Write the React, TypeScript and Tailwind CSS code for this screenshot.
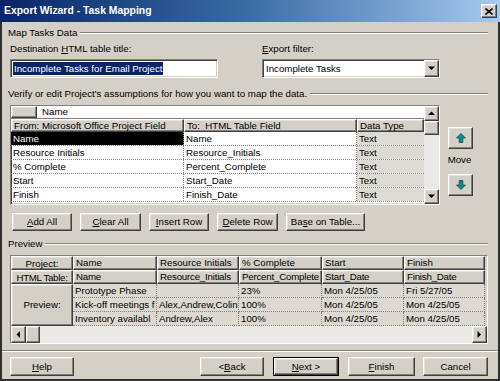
import React from 'react';

const raised =
  'bg-[#d4d0c8] border border-t-white border-l-white border-r-[#404040] border-b-[#404040] shadow-[inset_-1px_-1px_0_#808080,inset_1px_1px_0_#e4e1db]';
const sunken =
  'border border-t-[#808080] border-l-[#808080] border-r-white border-b-white shadow-[inset_1px_1px_0_#404040,inset_-1px_-1px_0_#d4d0c8]';

const U: React.FC<{ text: string; at: number }> = ({ text, at }) => {
  if (at < 0) return <>{text}</>;
  return (
    <>
      {text.slice(0, at)}
      <span className="underline underline-offset-[1px]">{text[at]}</span>
      {text.slice(at + 1)}
    </>
  );
};

const Btn: React.FC<{ label: string; u: number; w: string; def?: boolean }> = ({ label, u, w, def }) => (
  <div className={`${w} h-full ${def ? 'border border-black' : ''}`}>
    <div className={`${raised} w-full h-full flex items-center justify-center`}>
      <U text={label} at={u} />
    </div>
  </div>
);

const Tri: React.FC<{ dir: 'up' | 'down' | 'left' | 'right' }> = ({ dir }) => {
  const pts = {
    up: '0,4 7,4 3.5,0.5',
    down: '0,0.5 7,0.5 3.5,4',
    left: '4,0 4,7 0.5,3.5',
    right: '0.5,0 0.5,7 4,3.5',
  }[dir];
  const vb = dir === 'up' || dir === 'down' ? '0 0 7 4.5' : '0 0 4.5 7';
  const cls = dir === 'up' || dir === 'down' ? 'w-[7px] h-[4.5px]' : 'w-[4.5px] h-[7px]';
  return (
    <svg viewBox={vb} className={cls}>
      <polygon points={pts} fill="#000" />
    </svg>
  );
};

const ScrollBtn: React.FC<{ dir: 'up' | 'down' | 'left' | 'right'; cls: string }> = ({ dir, cls }) => (
  <div className={`${raised} ${cls} flex items-center justify-center shrink-0`}>
    <Tri dir={dir} />
  </div>
);

const MoveArrow: React.FC<{ down?: boolean }> = ({ down }) => (
  <svg viewBox="0 0 10 10" className={`w-[10px] h-[10px] ${down ? 'rotate-180' : ''}`}>
    <path d="M5 0.5 L9.5 5 H6.8 V9.5 H3.2 V5 H0.5 Z" fill="#0e8a8a" stroke="#0b4f4f" strokeWidth="0.8" />
  </svg>
);

const Etched: React.FC<{ className?: string }> = ({ className = '' }) => (
  <div className={`h-[2px] border-t border-t-[#808080] border-b border-b-white ${className}`} />
);

const mapRows = [
  ['Name', 'Name'],
  ['Resource Initials', 'Resource_Initials'],
  ['% Complete', 'Percent_Complete'],
  ['Start', 'Start_Date'],
  ['Finish', 'Finish_Date'],
];

const previewRows = [
  ['Prototype Phase', '', '23%', 'Mon 4/25/05', 'Fri 5/27/05'],
  ['Kick-off meetings f', 'Alex,Andrew,Colin', '100%', 'Mon 4/25/05', 'Mon 4/25/05'],
  ['Inventory availabl', 'Andrew,Alex', '100%', 'Mon 4/25/05', 'Mon 4/25/05'],
];

const App: React.FC = () => {
  return (
    <div className="w-[500px] h-[381px] flex flex-col bg-[#d4d0c8] text-black text-[9.7px] leading-[12px] font-['Liberation_Sans',Arial,sans-serif] overflow-hidden select-none">
      {/* Title bar */}
      <div className="h-[22px] shrink-0 flex items-center justify-between pl-[4px] pr-[3px] bg-linear-to-r from-[#0a246a] via-[#3a6ea5] to-[#a6caf0]">
        <span className="text-white font-bold text-[10.4px]">Export Wizard - Task Mapping</span>
        <div className={`${raised} w-[16px] h-[14px] flex items-center justify-center`}>
          <svg viewBox="0 0 8 7" className="w-[8px] h-[7px]">
            <path d="M0.5 0.5 L7.5 6.5 M7.5 0.5 L0.5 6.5" stroke="#000" strokeWidth="1.6" />
          </svg>
        </div>
      </div>

      {/* Body */}
      <div className="flex-1 flex flex-col pl-[6px] pr-[10px] border-x-2 border-b-2 border-x-[#303030] border-b-[#303030]">
        <div className="mt-[5px] h-[12px] flex items-center">
          <span className="pr-[3px]">Map Tasks Data</span>
          <Etched className="flex-1" />
        </div>

        <div className="flex ml-[2px] mt-[4px]">
          <div className="w-[208px]">
            <div className="h-[12px]">
              Destination <U text="HTML" at={0} /> table title:
            </div>
            <div className={`${sunken} mt-[4px] h-[19px] bg-white flex items-center px-[2px]`}>
              <span className="bg-[#0a246a] text-white px-[1px] leading-[13px]">Incomplete Tasks for Email Project</span>
            </div>
          </div>
          <div className="w-[178px] ml-[44px]">
            <div className="h-[12px]">
              <U text="Export filter:" at={0} />
            </div>
            <div className={`${sunken} mt-[4px] h-[19px] bg-white flex items-center`}>
              <span className="flex-1 pl-[3px]">Incomplete Tasks</span>
              <ScrollBtn dir="down" cls="w-[15px] h-full" />
            </div>
          </div>
        </div>

        <div className="mt-[10px] h-[12px] flex items-center">
          <span className="pr-[3px]">Verify or edit Project's assumptions for how you want to map the data.</span>
          <Etched className="flex-1" />
        </div>

        {/* Mapping grid + move buttons */}
        <div className="flex ml-[2px] mt-[5px]">
          <div className={`${sunken} w-[430px] h-[100px] bg-white flex`}>
            <div className="flex-1 flex flex-col">
              <div className="h-[13px] flex border-b border-[#808080]">
                <div className={`${raised} w-[26px] h-full`} />
                <div className="flex-1 bg-white pl-[5px] leading-[12px]">Name</div>
              </div>
              <div className="h-[13px] flex">
                <div className={`${raised} w-[173px] pl-[2px] leading-[11px]`}>From: Microsoft Office Project Field</div>
                <div className={`${raised} w-[173px] pl-[2px] leading-[11px]`}>To:&nbsp; HTML Table Field</div>
                <div className={`${raised} flex-1 pl-[2px] leading-[11px]`}>Data Type</div>
              </div>
              {mapRows.map((r, i) => (
                <div key={i} className="h-[14px] flex border-b border-dotted border-[#808080]">
                  <div
                    className={`w-[173px] pl-[2px] leading-[13px] border-r border-dotted border-[#808080] ${
                      i === 0 ? 'bg-black text-white' : ''
                    }`}
                  >
                    {r[0]}
                  </div>
                  <div className="w-[173px] pl-[2px] leading-[13px] border-r border-dotted border-[#808080]">{r[1]}</div>
                  <div className="flex-1 pl-[2px] leading-[13px] bg-[#dddad4]">Text</div>
                </div>
              ))}
            </div>
            <div className="w-[15px] flex flex-col bg-[#ebe9e5]">
              <ScrollBtn dir="up" cls="h-[15px] w-full" />
              <div className={`${raised} h-[14px] w-full`} />
              <div className="flex-1" />
              <ScrollBtn dir="down" cls="h-[15px] w-full" />
            </div>
          </div>

          <div className="ml-[8px] w-[25px] flex flex-col items-center">
            <div className={`${raised} mt-[22px] w-[25px] h-[22px] flex items-center justify-center`}>
              <MoveArrow />
            </div>
            <div className="mt-[5px] h-[12px] -ml-[2px]">Move</div>
            <div className={`${raised} mt-[8px] w-[25px] h-[22px] flex items-center justify-center`}>
              <MoveArrow down />
            </div>
          </div>
        </div>

        {/* Action buttons */}
        <div className="flex gap-[8px] ml-[4px] mt-[8px] h-[18px]">
          <Btn label="Add All" u={0} w="w-[60px]" />
          <Btn label="Clear All" u={0} w="w-[61px]" />
          <Btn label="Insert Row" u={0} w="w-[60px]" />
          <Btn label="Delete Row" u={0} w="w-[61px]" />
          <Btn label="Base on Table..." u={2} w="w-[79px]" />
        </div>

        <div className="mt-[7px] h-[12px] flex items-center">
          <span className="pr-[3px]">Preview</span>
          <Etched className="flex-1" />
        </div>

        {/* Preview grid */}
        <div className={`${sunken} ml-[2px] mt-[5px] w-[478px] h-[89px] flex flex-col`}>
          <div className="grid grid-cols-[62px_84px_82px_83px_82px_81px] grid-rows-[14px_14px_14px_14px_14px] bg-[#d4d0c8]">
            <div className={`${raised} flex items-center justify-center leading-[11px]`}>Project:</div>
            {['Name', 'Resource Initials', '% Complete', 'Start', 'Finish'].map((t) => (
              <div key={t} className={`${raised} pl-[2px] leading-[11px] whitespace-nowrap overflow-hidden`}>
                {t}
              </div>
            ))}
            <div className={`${raised} flex items-center justify-center leading-[11px] tracking-[-0.3px] whitespace-nowrap`}>
              HTML Table:
            </div>
            {['Name', 'Resource_Initials', 'Percent_Complete', 'Start_Date', 'Finish_Date'].map((t) => (
              <div
                key={t}
                className={`${raised} pl-[2px] leading-[11px] whitespace-nowrap overflow-hidden tracking-[-0.2px]`}
              >
                {t}
              </div>
            ))}
            <div className={`${raised} row-span-3 flex items-center justify-center`}>Preview:</div>
            {previewRows.map((r, i) =>
              r.map((c, j) => (
                <div
                  key={`${i}-${j}`}
                  className="pl-[2px] leading-[13px] whitespace-nowrap overflow-hidden border-r border-b border-dotted border-[#808080] bg-[#dcd9d3]"
                >
                  {c}
                </div>
              ))
            )}
          </div>
          <div className="flex-1 flex bg-[#ebe9e5]">
            <ScrollBtn dir="left" cls="w-[15px] h-full" />
            <div className={`${raised} w-[14px] h-full`} />
            <div className="flex-1" />
            <ScrollBtn dir="right" cls="w-[15px] h-full" />
          </div>
        </div>

        <Etched className="-ml-[6px] -mr-[10px] mt-[6px]" />

        {/* Bottom buttons */}
        <div className="flex mt-[5px] h-[19px] ml-[2px]">
          <Btn label="Help" u={0} w="w-[64px]" />
          <div className="w-[126px]" />
          <Btn label="< Back" u={2} w="w-[64px]" />
          <div className="w-[9px]" />
          <Btn label="Next >" u={0} w="w-[66px]" def />
          <div className="w-[9px]" />
          <Btn label="Finish" u={0} w="w-[67px]" />
          <div className="w-[8px]" />
          <Btn label="Cancel" u={-1} w="w-[65px]" />
        </div>
      </div>
    </div>
  );
};

export default App;
